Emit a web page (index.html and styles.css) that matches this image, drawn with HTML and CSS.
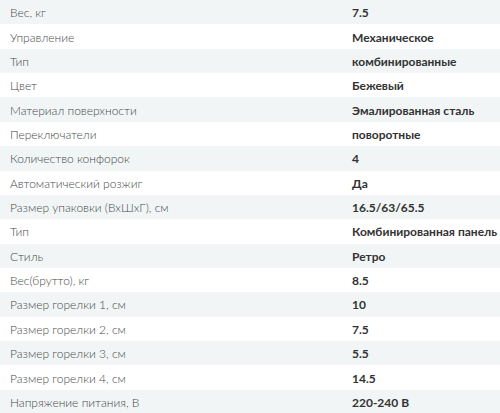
FILE: index.html
```html
<!DOCTYPE html>
<html lang="ru">
<head>
<meta charset="utf-8">
<link rel="stylesheet" href="styles.css">
</head>
<body>
<div class="specs">
  <div class="row"><div class="label">Вес, кг</div><div class="value">7.5</div></div>
  <div class="row"><div class="label">Управление</div><div class="value">Механическое</div></div>
  <div class="row"><div class="label">Тип</div><div class="value">комбинированные</div></div>
  <div class="row"><div class="label">Цвет</div><div class="value">Бежевый</div></div>
  <div class="row"><div class="label">Материал поверхности</div><div class="value">Эмалированная сталь</div></div>
  <div class="row"><div class="label">Переключатели</div><div class="value">поворотные</div></div>
  <div class="row"><div class="label">Количество конфорок</div><div class="value">4</div></div>
  <div class="row"><div class="label">Автоматический розжиг</div><div class="value">Да</div></div>
  <div class="row"><div class="label">Размер упаковки (ВхШхГ), см</div><div class="value">16.5/63/65.5</div></div>
  <div class="row"><div class="label">Тип</div><div class="value">Комбинированная панель</div></div>
  <div class="row"><div class="label">Стиль</div><div class="value">Ретро</div></div>
  <div class="row"><div class="label">Вес(брутто), кг</div><div class="value">8.5</div></div>
  <div class="row"><div class="label">Размер горелки 1, см</div><div class="value">10</div></div>
  <div class="row"><div class="label">Размер горелки 2, см</div><div class="value">7.5</div></div>
  <div class="row"><div class="label">Размер горелки 3, см</div><div class="value">5.5</div></div>
  <div class="row"><div class="label">Размер горелки 4, см</div><div class="value">14.5</div></div>
  <div class="row"><div class="label">Напряжение питания, В</div><div class="value">220-240 В</div></div>
</div>
</body>
</html>
```

FILE: styles.css
```css
html, body {
  margin: 0;
  padding: 0;
  background: #ffffff;
}
body {
  font-family: Lato, "Liberation Sans", sans-serif;
  font-size: 12px;
}
.specs {
  display: flex;
  flex-direction: column;
  width: 500px;
}
.row {
  display: grid;
  grid-template-columns: 342px 1fr;
  height: 24.36px;
  align-items: center;
}
.row:nth-child(odd) {
  background: #f1f5f5;
}
.label {
  padding-left: 10px;
  padding-top: 1px;
  color: #474b4b;
  font-weight: 300;
}
.value {
  padding-left: 10px;
  padding-top: 1px;
  color: #333;
  font-weight: 700;
  white-space: nowrap;
}
```
